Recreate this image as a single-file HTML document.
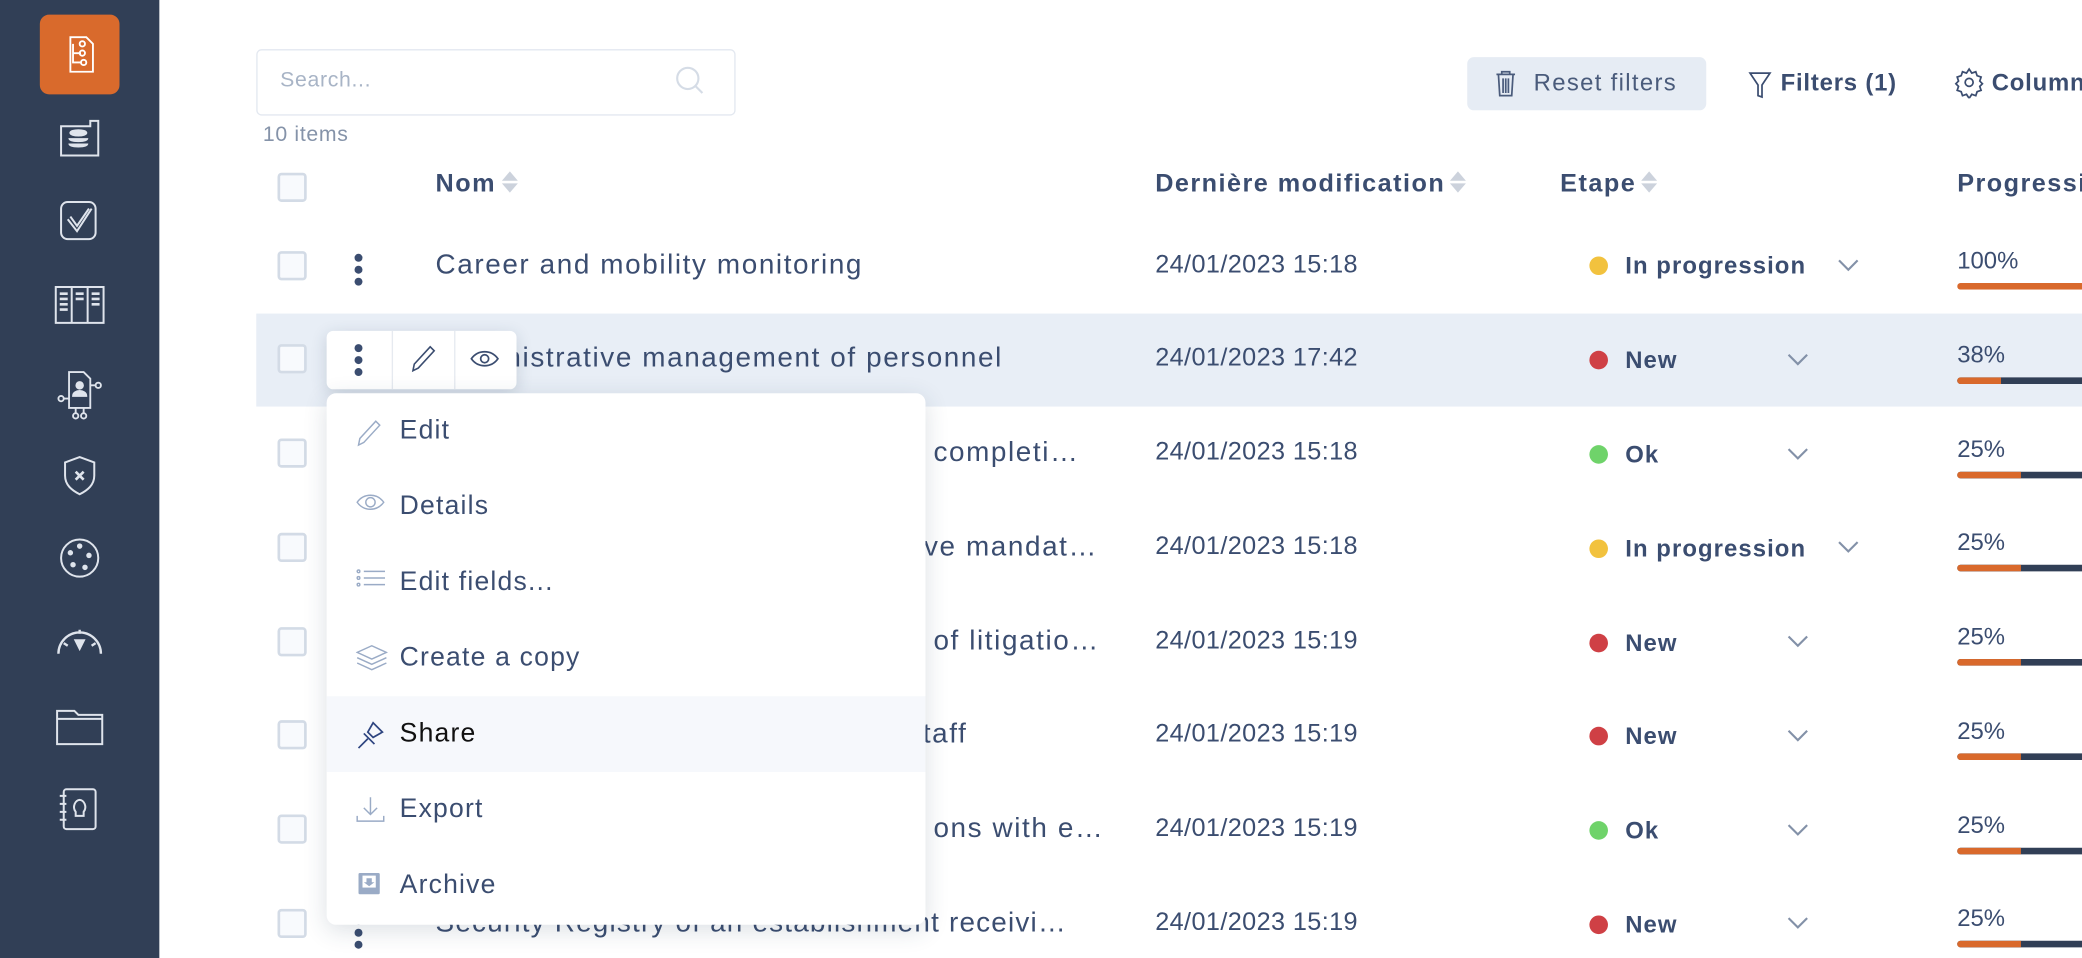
<!DOCTYPE html>
<html><head><meta charset="utf-8"><style>
*{box-sizing:border-box;margin:0;padding:0}
html,body{width:2082px;height:958px;overflow:hidden;background:#fff}
#s{position:absolute;left:0;top:0;width:1568px;height:721px;transform:scale(1.32781,1.3287);transform-origin:0 0;font-family:"Liberation Sans",sans-serif;color:#3b4d70;overflow:hidden}
.sb{position:absolute;left:0;top:0;width:120px;height:721px;background:#313f56}
.ic{position:absolute;left:40px;width:40px;height:40px}
.a{position:absolute}
.cb{position:absolute;left:209px;width:22px;height:22px;border:2px solid #d3dbe6;border-radius:3px;background:#f8fafd}
.dots{position:absolute;left:267px;width:6px}
.dots i{display:block;width:6px;height:6px;border-radius:3px;background:#3b4d70;margin-bottom:3px}
.t{position:absolute;font-size:21px;white-space:nowrap;letter-spacing:1.2px}
.h{position:absolute;font-size:19px;font-weight:bold;letter-spacing:1.1px;white-space:nowrap}
.so{display:inline-block;width:12px;height:18px;position:relative;vertical-align:-2px;margin-left:4px}
.so:before{content:"";position:absolute;left:0;top:1px;border:6px solid transparent;border-bottom:7px solid #ccd2dc;border-top:0}
.so:after{content:"";position:absolute;left:0;top:10px;border:6px solid transparent;border-top:7px solid #ccd2dc;border-bottom:0}
.d{position:absolute;left:870px;font-size:19px;letter-spacing:.3px}
.st{position:absolute;left:1197px;font-size:18px;font-weight:bold;letter-spacing:.8px}
.st b{display:inline-block;width:14px;height:14px;border-radius:7px;margin-right:13px;vertical-align:-1px}
.pg{position:absolute;left:1474px;font-size:18px}
.bar{position:absolute;left:1474px;width:100px;height:5px;border-radius:3px;background:#313f56;overflow:hidden}
.bar i{display:block;height:5px;background:#d9692c}
.mi{position:absolute;left:246px;width:451px;height:57px;font-size:20px;letter-spacing:.9px;padding-left:55px;line-height:57px}
.mi svg{position:absolute;left:22px;top:18px}
</style></head><body><div id="s">
<div class="sb">
<div class="a" style="left:30px;top:11px;width:60px;height:60px;background:#d96a2c;border-radius:7px"></div>
<svg class="ic" style="top:21px" viewBox="0 0 40 40" fill="none" stroke="#fff" stroke-width="1.4"><path d="M13 7h12l5 5v21H13z"/><path d="M15 12v14h6M15 19h6"/><circle cx="22" cy="12" r="2"/><circle cx="22" cy="19" r="2"/><circle cx="23" cy="26" r="2"/></svg>
<svg class="ic" style="top:83px" viewBox="0 0 40 40" fill="none" stroke="#dfe4ec" stroke-width="1.5"><path d="M6 12h22v-4h6v26H6z"/><ellipse cx="19" cy="17" rx="6" ry="2" fill="#dfe4ec"/><path d="M13 21c0 2 12 2 12 0M13 25c0 2 12 2 12 0" stroke-width="3"/></svg>
<svg class="ic" style="top:146px" viewBox="0 0 40 40" fill="none" stroke="#dfe4ec" stroke-width="1.5"><rect x="6" y="6" width="26" height="28" rx="5"/><path d="M11 19l7 9 11-17M13 17l5 7 9-13"/></svg>
<svg class="ic" style="top:210px" viewBox="0 0 40 40" fill="none" stroke="#dfe4ec" stroke-width="1.5"><rect x="2" y="6" width="36" height="27"/><path d="M14 6v27M26 6v27"/><path d="M5 11h6M5 15h6M5 19h6M5 23h6M17 11h6M17 15h6M29 11h6M29 15h6M29 19h6" stroke-width="2"/></svg>
<svg class="ic" style="top:276px" viewBox="0 0 40 40" fill="none" stroke="#dfe4ec" stroke-width="1.4"><path d="M12 4h11l5 5v22H12z"/><circle cx="20" cy="14" r="2.5" fill="#dfe4ec"/><path d="M15 22c0-5 10-5 10 0z" fill="#dfe4ec"/><path d="M28 14h4M8 24h4M17 31v4M23 31v4"/><circle cx="34" cy="14" r="2"/><circle cx="6" cy="24" r="2"/><circle cx="17" cy="37" r="2"/><circle cx="23" cy="37" r="2"/></svg>
<svg class="ic" style="top:338px" viewBox="0 0 40 40" fill="none" stroke="#dfe4ec" stroke-width="1.5"><path d="M20 6l11 4v10c0 7-5 11-11 14-6-3-11-7-11-14V10z"/><path d="M17 17l6 6M23 17l-6 6" stroke-width="2"/></svg>
<svg class="ic" style="top:400px" viewBox="0 0 40 40" fill="none" stroke="#dfe4ec" stroke-width="1.5"><circle cx="20" cy="20" r="14"/><g fill="#dfe4ec"><circle cx="20" cy="11" r="1.3"/><circle cx="13" cy="16" r="1.3"/><circle cx="27" cy="18" r="1.3"/><circle cx="15" cy="25" r="1.3"/><circle cx="24" cy="27" r="1.3"/></g></svg>
<svg class="ic" style="top:462px" viewBox="0 0 40 40" fill="none" stroke="#dfe4ec" stroke-width="1.8"><path d="M4 30a16 16 0 0 1 32 0"/><path d="M8 22l3 2M32 22l-3 2M20 12v3"/><path d="M17 20l6 0-3 6z" fill="#dfe4ec"/></svg>
<svg class="ic" style="top:527px" viewBox="0 0 40 40" fill="none" stroke="#dfe4ec" stroke-width="1.5"><path d="M3 8h13l3 3h18v22H3z"/><path d="M3 14h34"/></svg>
<svg class="ic" style="top:589px" viewBox="0 0 40 40" fill="none" stroke="#dfe4ec" stroke-width="1.5"><rect x="8" y="5" width="24" height="30" rx="2"/><path d="M5 10h5M5 16h5M5 22h5M5 28h5"/><path d="M17 22c-3-4 0-9 3-9s6 5 3 9v3h-6z"/></svg>
</div>

<div class="a" style="left:193px;top:37px;width:361px;height:50px;border:1.5px solid #e3e8f0;border-radius:4px"></div>
<div class="t" style="left:211px;top:52px;font-size:16px;letter-spacing:.5px;color:#a8b4c6">Search...</div>
<svg class="a" style="left:508px;top:49px" width="24" height="24" fill="none" stroke="#d5dce6" stroke-width="1.6"><circle cx="10" cy="10" r="8"/><path d="M16 16l5 5"/></svg>
<div class="t" style="left:198px;top:93px;font-size:16px;letter-spacing:.5px;color:#8593a9">10 items</div>

<div class="a" style="left:1105px;top:43px;width:180px;height:40px;background:#e6ecf4;border-radius:5px"></div>
<svg class="a" style="left:1126px;top:52px" width="16" height="22" fill="none" stroke="#4a5b7b" stroke-width="1.3"><path d="M1 4h14M5 4V2h6v2M2.5 4l1 16h9l1-16M6 7v11M8 7v11M10 7v11"/></svg>
<div class="t" style="left:1155px;top:52px;font-size:18px;letter-spacing:1px;color:#4a5b7b">Reset filters</div>
<svg class="a" style="left:1316px;top:52px" width="20" height="24" fill="none" stroke="#3b4d70" stroke-width="1.3"><path d="M2 3h15l-6 9v9l-3-1v-8z"/></svg>
<div class="h" style="left:1341px;top:52px;font-size:18px;letter-spacing:.6px">Filters (1)</div>
<svg class="a" style="left:1471px;top:50px" width="24" height="24" fill="none" stroke="#3b4d70" stroke-width="1.3"><circle cx="12" cy="12" r="3"/><path d="M12 2l2 3 3-1 1 3 3 1-1 3 2 2-2 2 1 3-3 1-1 3-3-1-2 3-2-3-3 1-1-3-3-1 1-3-2-2 2-2-1-3 3-1 1-3 3 1z"/></svg>
<div class="h" style="left:1500px;top:52px;font-size:18px;letter-spacing:.6px">Columns</div>

<div class="cb" style="top:130px"></div>
<div class="h" style="left:328px;top:128px">Nom<span class="so"></span></div>
<div class="h" style="left:870px;top:128px">Dernière modification<span class="so"></span></div>
<div class="h" style="left:1175px;top:128px">Etape<span class="so"></span></div>
<div class="h" style="left:1474px;top:128px">Progression</div>

<div class="a" style="left:193px;top:236px;width:1375px;height:70px;background:#e8eef6"></div>

<div class="cb" style="top:189px"></div><div class="dots" style="top:191px"><i></i><i></i><i></i></div>
<div class="t" style="left:328px;top:188px">Career and mobility monitoring</div>
<div class="cb" style="top:259px"></div>
<div class="t" style="left:328px;top:258px">Administrative management of personnel</div>
<div class="cb" style="top:330px"></div><div class="t" style="left:703px;top:329px">completi…</div>
<div class="cb" style="top:401px"></div><div class="t" style="left:690px;top:400px">ive mandat…</div>
<div class="cb" style="top:472px"></div><div class="t" style="left:703px;top:471px">of litigatio…</div>
<div class="cb" style="top:542px"></div><div class="t" style="left:695px;top:541px">taff</div>
<div class="cb" style="top:613px"></div><div class="t" style="left:703px;top:612px">ons with e…</div>
<div class="cb" style="top:684px"></div><div class="dots" style="top:690px"><i></i><i></i><i></i></div>
<div class="t" style="left:328px;top:683px;letter-spacing:.9px">Security Registry of an establishment receivi…</div>

<div class="d" style="top:189px">24/01/2023 15:18</div>
<div class="d" style="top:259px">24/01/2023 17:42</div>
<div class="d" style="top:330px">24/01/2023 15:18</div>
<div class="d" style="top:401px">24/01/2023 15:18</div>
<div class="d" style="top:472px">24/01/2023 15:19</div>
<div class="d" style="top:542px">24/01/2023 15:19</div>
<div class="d" style="top:613px">24/01/2023 15:19</div>
<div class="d" style="top:684px">24/01/2023 15:19</div>

<div class="st" style="top:190px"><b style="background:#f2c23e"></b>In progression</div>
<div class="st" style="top:261px"><b style="background:#cf4045"></b>New</div>
<div class="st" style="top:332px"><b style="background:#6fd36a"></b>Ok</div>
<div class="st" style="top:403px"><b style="background:#f2c23e"></b>In progression</div>
<div class="st" style="top:474px"><b style="background:#cf4045"></b>New</div>
<div class="st" style="top:544px"><b style="background:#cf4045"></b>New</div>
<div class="st" style="top:615px"><b style="background:#6fd36a"></b>Ok</div>
<div class="st" style="top:686px"><b style="background:#cf4045"></b>New</div>
<svg class="a" style="left:0;top:0" width="1568" height="721" fill="none" stroke="#8391a8" stroke-width="1.6"><path d="M1385 196l7 7 7-7"/><path d="M1385 408l7 7 7-7"/><path d="M1347 267l7 7 7-7M1347 338l7 7 7-7M1347 479l7 7 7-7M1347 550l7 7 7-7M1347 621l7 7 7-7M1347 691l7 7 7-7"/></svg>

<div class="pg" style="top:186px">100%</div><div class="bar" style="top:213px"><i style="width:100px"></i></div>
<div class="pg" style="top:257px">38%</div><div class="bar" style="top:284px"><i style="width:33px"></i></div>
<div class="pg" style="top:328px">25%</div><div class="bar" style="top:355px"><i style="width:48px"></i></div>
<div class="pg" style="top:398px">25%</div><div class="bar" style="top:425px"><i style="width:48px"></i></div>
<div class="pg" style="top:469px">25%</div><div class="bar" style="top:496px"><i style="width:48px"></i></div>
<div class="pg" style="top:540px">25%</div><div class="bar" style="top:567px"><i style="width:48px"></i></div>
<div class="pg" style="top:611px">25%</div><div class="bar" style="top:638px"><i style="width:48px"></i></div>
<div class="pg" style="top:681px">25%</div><div class="bar" style="top:708px"><i style="width:48px"></i></div>

<div class="a" style="left:246px;top:249px;width:143px;height:44px;background:#fff;border-radius:5px;box-shadow:0 3px 12px rgba(40,60,90,.18)"></div>
<div class="a" style="left:295px;top:249px;width:1px;height:44px;background:#e6eaf0"></div>
<div class="a" style="left:342px;top:249px;width:1px;height:44px;background:#e6eaf0"></div>
<div class="dots" style="top:259px"><i></i><i></i><i></i></div>
<svg class="a" style="left:308px;top:258px" width="22" height="24" fill="none" stroke="#3b4d70" stroke-width="1.2"><path d="M3 21l1-5 12-13 3 3-12 13z"/></svg>
<svg class="a" style="left:354px;top:262px" width="22" height="16" fill="none" stroke="#3b4d70" stroke-width="1.3"><path d="M1 8c5-7 15-7 20 0-5 7-15 7-20 0z"/><circle cx="11" cy="8" r="3"/></svg>

<div class="a" style="left:246px;top:296px;width:451px;height:400px;background:#fff;border-radius:7px;box-shadow:0 4px 18px rgba(40,60,90,.16)"></div>
<div class="a" style="left:246px;top:524px;width:451px;height:57px;background:#f6f8fc"></div>
<div class="mi" style="top:296px"><svg width="22" height="22" fill="none" stroke="#9aabc6" stroke-width="1.1"><path d="M2 21l1-5 12-13 3 3-12 13z"/></svg>Edit</div>
<div class="mi" style="top:353px"><svg width="22" height="20" fill="none" stroke="#9aabc6" stroke-width="1.1"><path d="M1 7c5-7 15-7 20 0-5 7-15 7-20 0z"/><circle cx="11" cy="7" r="3.5"/></svg>Details</div>
<div class="mi" style="top:410px"><svg width="22" height="20" fill="none" stroke="#9aabc6" stroke-width="1.1"><path d="M6 2h16M6 7h16M6 12h16"/><circle cx="2" cy="2" r="1"/><circle cx="2" cy="7" r="1"/><circle cx="2" cy="12" r="1"/></svg>Edit fields...</div>
<div class="mi" style="top:467px"><svg width="24" height="22" fill="none" stroke="#9aabc6" stroke-width="1.1"><path d="M1 6l11-5 11 5-11 5z"/><path d="M1 10l11 5 11-5M1 14l11 5 11-5"/></svg>Create a copy</div>
<div class="mi" style="top:524px;color:#111"><svg width="22" height="22" fill="none" stroke="#2e4580" stroke-width="1.3"><path d="M2 21l7-7M6 10l8 8M9 9l4-7 7 7-7 4z"/></svg>Share</div>
<div class="mi" style="top:581px"><svg width="22" height="22" fill="none" stroke="#9aabc6" stroke-width="1.1"><path d="M11 1v13M6 9l5 5 5-5M1 15v4h20v-4"/></svg>Export</div>
<div class="mi" style="top:638px"><svg width="22" height="22"><rect x="2" y="1" width="16" height="16" rx="1" fill="#9aabc6"/><rect x="5" y="3" width="10" height="9" fill="#fff"/><path d="M8 5h4v3h2l-4 3-4-3h2z" fill="#9aabc6"/></svg>Archive</div>
</div></body></html>
